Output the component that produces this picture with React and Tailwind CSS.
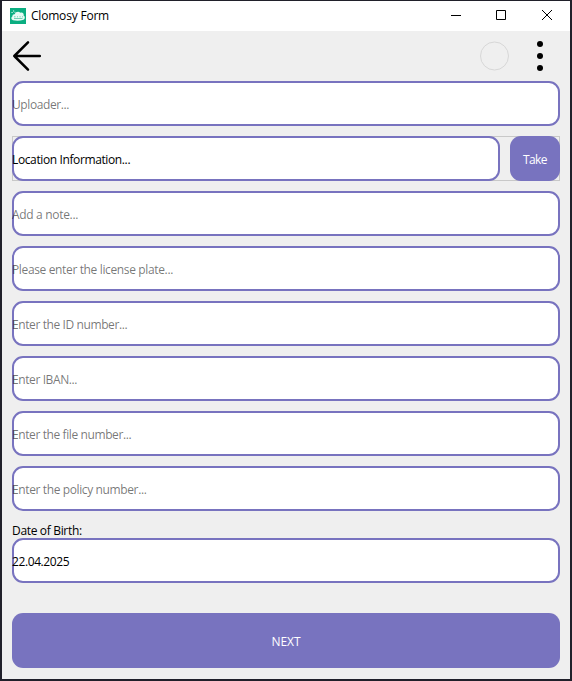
import React from "react";

function Field({ text, filled = false, tracking, className = "" }) {
  return (
    <div className={`relative flex h-[45px] items-center rounded-[11px] border-2 border-[#7873bf] bg-white ${className}`}>
      <span className={`-ml-[2px] whitespace-nowrap pt-[2px] ${filled ? "text-black" : "text-black/55"} ${tracking}`}>{text}</span>
    </div>
  );
}

function AppLogo() {
  return (
    <svg className="h-4 w-4" viewBox="0 0 16 16">
      <rect width="16" height="16" fill="#0bae81" />
      <path d="M3 12.2C1 11.6.7 9.2 2.5 8.3 2.2 6.7 3.6 5.9 4.7 6.2 5.5 3.7 8.8 3 10.3 4.8 12.3 3.8 14.3 5.6 13.6 7.4 15.6 8.5 15 11.5 12.8 12 10 12.8 6 12.8 3 12.2Z" fill="#e7faf4" />
      <path d="M4 8.8h1.5M7 8.8h1M9.5 8.8h1.2M12 8.8h1M4 10.5h8.5" stroke="#55c6a5" strokeWidth=".8" />
      <path d="M1.5 4.5h1.2M3 3h1.2M4.5 4.3h1" stroke="#d7f6ec" />
    </svg>
  );
}

export default function App() {
  return (
    <div className="h-[681px] w-[572px] bg-[#20202a] px-[2px] pt-px font-['Open_Sans','Noto_Sans',sans-serif] text-[12px] leading-4 text-black">
      <div className="flex h-[678px] flex-col bg-[#efefef]">
        <header className="flex h-[30px] shrink-0 items-center bg-white pl-2">
          <AppLogo />
          <span className="ml-[5px] whitespace-nowrap tracking-[-0.2px]">Clomosy Form</span>
          <div className="ml-auto flex">
            <svg className="h-[30px] w-[119px]" viewBox="0 0 119 30" fill="none" stroke="black">
              <path d="M0 14.5h10M45.5 9.5h9v9h-9ZM91 9l10 10M101 9l-10 10" />
            </svg>
          </div>
        </header>

        <nav className="flex h-[50px] shrink-0 items-center pl-[10px] pr-[10px]">
          <svg className="h-[32px] w-[32px]" viewBox="0 0 32 32" fill="none" stroke="black" strokeWidth="2.5" strokeLinecap="round" strokeLinejoin="round">
            <path d="M27.8 16H2.3L16 2.3M2.3 16 16 29.7" />
          </svg>
          <svg className="ml-auto h-[30px] w-[80px]" viewBox="0 0 80 30">
            <circle cx="14.5" cy="15" r="14" fill="none" stroke="#d7d7d7" />
            <g fill="black">
              <circle cx="60" cy="3" r="3" />
              <circle cx="60" cy="15" r="3" />
              <circle cx="60" cy="27" r="3" />
            </g>
          </svg>
        </nav>

        <main className="flex flex-col px-[10px]">
          <div className="flex flex-col gap-[10px]">
            <Field text="Uploader..." tracking="tracking-[-0.4px]" />
            <div className="flex h-[45px] gap-[10px] bg-[#efefef] outline-1 -outline-offset-1 outline-[#c8c8c8]">
              <Field text="Location Information..." filled tracking="tracking-[-0.38px]" className="w-[488px]" />
              <button className="relative flex h-[45px] w-[50px] items-center justify-center rounded-[11px] bg-[#7873bf] pt-[2px] tracking-[-0.6px] text-white">Take</button>
            </div>
            <Field text="Add a note..." tracking="tracking-[-0.32px]" />
            <Field text="Please enter the license plate..." tracking="tracking-[-0.36px]" />
            <Field text="Enter the ID number..." tracking="tracking-[-0.4px]" />
            <Field text="Enter IBAN..." tracking="tracking-[-0.4px]" />
            <Field text="Enter the file number..." tracking="tracking-[-0.4px]" />
            <Field text="Enter the policy number..." tracking="tracking-[-0.38px]" />
          </div>
          <label className="mt-[12px] h-[15px] whitespace-nowrap tracking-[-0.33px]">Date of Birth:</label>
          <Field text="22.04.2025" filled tracking="tracking-[-0.4px]" />
          <button className="mt-[30px] flex h-[55px] items-center justify-center rounded-[11px] bg-[#7873bf] pt-[2px] text-white">NEXT</button>
        </main>
      </div>
    </div>
  );
}
